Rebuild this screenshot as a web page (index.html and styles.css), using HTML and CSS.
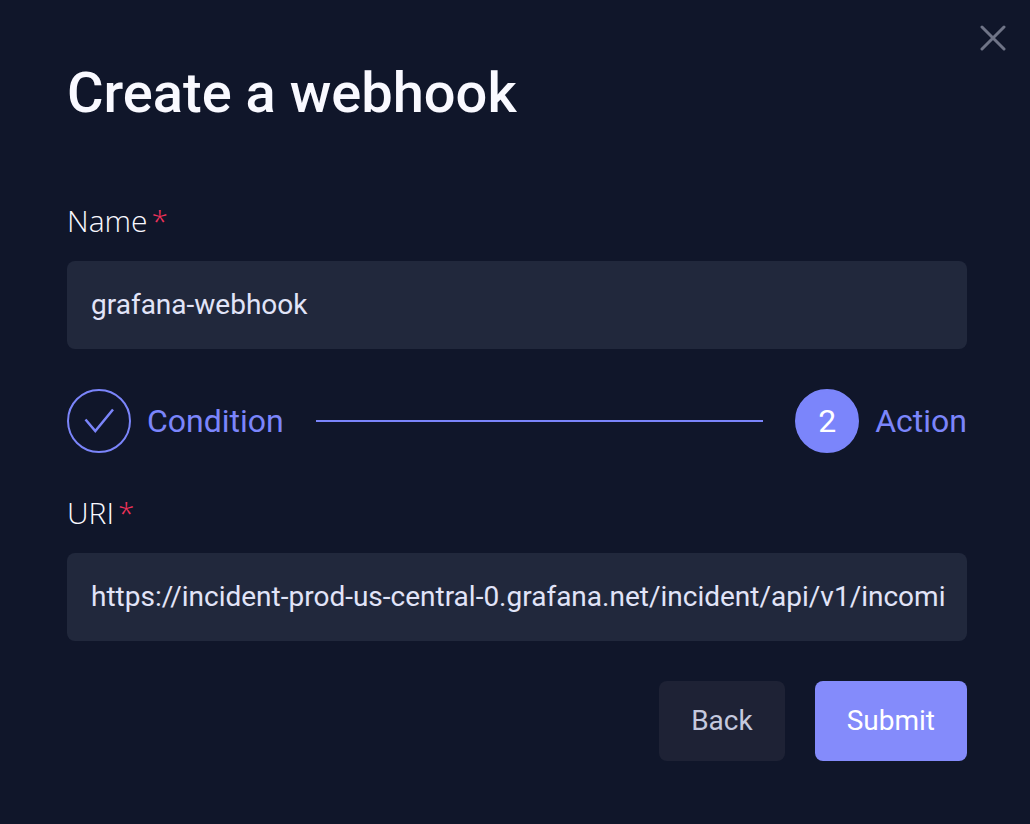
FILE: index.html
```
<!DOCTYPE html>
<html lang="en">

<head>
    <meta charset="UTF-8">
    <meta name="viewport" content="width=device-width, initial-scale=1.0">
    <title>Create a webhook</title>
    <link rel="stylesheet" href="styles.css">
</head>

<body>
    <main class="modal">
        <button class="close" type="button" aria-label="Close">
            <svg width="26" height="26" viewBox="0 0 26 26">
                <path d="M2 2L24 24M24 2L2 24" />
            </svg>
        </button>
        <h1 class="title">Create a webhook</h1>
        <form class="form">
            <div class="field">
                <label class="label" for="name">Name<span class="required">*</span></label>
                <input class="input" type="text" id="name" value="grafana-webhook">
            </div>
            <div class="steps">
                <div class="step">
                    <span class="circle">
                        <svg width="32" height="28" viewBox="0 0 32 28">
                            <path d="M2.5 12.5L12.3 24L30 2.5" />
                        </svg>
                    </span>
                    <span>Condition</span>
                </div>
                <div class="line"></div>
                <div class="step">
                    <span class="circle active">2</span>
                    <span>Action</span>
                </div>
            </div>
            <div class="field">
                <label class="label" for="uri">URI<span class="required">*</span></label>
                <input class="input" type="text" id="uri" value="https://incident-prod-us-central-0.grafana.net/incident/api/v1/incomi">
            </div>
            <div class="buttons">
                <button class="btn" type="button">Back</button>
                <button class="btn submit" type="submit">Submit</button>
            </div>
        </form>
    </main>
</body>

</html>
```
FILE: styles.css
```
* {
    box-sizing: border-box;
}

body {
    margin: 0;
    background-color: #10162a;
    font-family: Roboto, sans-serif;
    font-size: 28px;
    color: #e1e4f8;
}

.modal {
    position: relative;
    padding: 61px 63px 60px 67px;
}

.close {
    position: absolute;
    top: 25px;
    right: 24px;
    padding: 0;
    border: none;
    background: none;
    line-height: 0;
    cursor: pointer;
}

.close path {
    stroke: #6f7487;
    stroke-width: 3;
    stroke-linecap: round;
}

.title {
    margin: 0 0 76px;
    font-size: 56px;
    line-height: 64px;
    font-weight: 500;
    color: #f9f9ff;
}

.form {
    display: flex;
    flex-direction: column;
    gap: 40px;
}

.field {
    display: flex;
    flex-direction: column;
    gap: 20px;
}

.label {
    font-family: "Open Sans", "Noto Sans", sans-serif;
    font-size: 30px;
    line-height: 40px;
    font-weight: 300;
    color: #f9f9ff;
}

.required {
    margin-left: 4px;
    color: #f0325a;
}

.input {
    width: 100%;
    height: 88px;
    padding: 0 20px 2px 24px;
    border: none;
    border-radius: 8px;
    outline: none;
    background-color: #21283c;
    font: inherit;
    color: inherit;
}

.steps {
    display: flex;
    align-items: center;
    gap: 32px;
    font-size: 32px;
    color: #7b85fb;
}

.step {
    display: flex;
    align-items: center;
    gap: 16px;
}

.circle {
    display: flex;
    align-items: center;
    justify-content: center;
    width: 64px;
    height: 64px;
    border: 2px solid #7b85fb;
    border-radius: 50%;
}

.circle path {
    fill: none;
    stroke: #7b85fb;
    stroke-width: 2.5;
}

.active {
    background-color: #7b85fb;
    color: white;
}

.line {
    flex: 1;
    height: 2px;
    background-color: #7b85fb;
}

.buttons {
    display: flex;
    justify-content: flex-end;
    gap: 30px;
}

.btn {
    height: 80px;
    padding: 0 32px 2px;
    border: none;
    border-radius: 8px;
    background-color: #1e2235;
    font: inherit;
    color: #c5c9de;
    cursor: pointer;
}

.submit {
    background-color: #848bfb;
    color: white;
}
```
